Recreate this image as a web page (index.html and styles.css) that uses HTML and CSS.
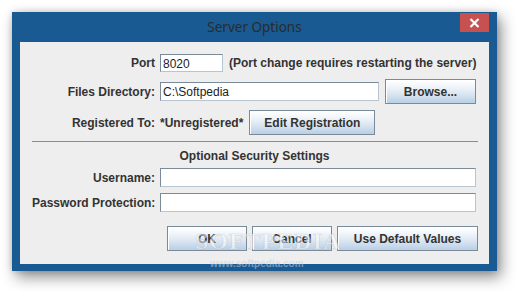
FILE: index.html
```html
<!DOCTYPE html>
<html>
<head>
<meta charset="utf-8">
<link rel="stylesheet" href="styles.css">
</head>
<body>
<div class="window">
  <div class="titlebar">
    <span class="title">Server Options</span>
    <span class="close"><svg width="11" height="10" viewBox="0 0 11 10"><path d="M1.5 1 L9.5 9 M9.5 1 L1.5 9" stroke="#fff" stroke-width="2.2"/></svg></span>
  </div>
  <div class="client">
    <div class="row r-port">
      <label class="lbl">Port</label>
      <div class="field f-port">8020</div>
      <span class="note">(Port change requires restarting the server)</span>
    </div>
    <div class="row r-files">
      <label class="lbl">Files Directory:</label>
      <div class="field f-dir">C:\Softpedia</div>
      <button class="btn b-browse">Browse...</button>
    </div>
    <div class="row r-reg">
      <label class="lbl">Registered To:</label>
      <span class="regval">*Unregistered*</span>
      <button class="btn b-edit">Edit Registration</button>
    </div>
    <div class="sep"></div>
    <div class="heading">Optional Security Settings</div>
    <div class="row r-user">
      <label class="lbl">Username:</label>
      <div class="field f-wide"></div>
    </div>
    <div class="row r-pass">
      <label class="lbl">Password Protection:</label>
      <div class="field f-wide"></div>
    </div>
    <div class="actions">
      <button class="btn b-ok">OK</button>
      <button class="btn b-cancel">Cancel</button>
      <button class="btn b-default">Use Default Values</button>
    </div>
    <div class="wm">SOFTPEDIA<sup>™</sup></div>
    <div class="wm-url">www.softpedia.com</div>
  </div>
</div>
</body>
</html>
```
FILE: styles.css
```css
* { box-sizing: border-box; }
html, body { margin: 0; padding: 0; background: #ffffff; }
body { width: 517px; height: 292px; overflow: hidden; padding: 12px 0 0 12px; }

.window {
  width: 485px;
  height: 259px;
  background: #195a92;
  padding: 0 8px 7px 8px;
  display: flex;
  flex-direction: column;
  box-shadow: 4px 6px 14px rgba(0,0,0,0.45), 0 0 6px rgba(0,0,0,0.15);
}
.titlebar {
  height: 30px;
  position: relative;
  display: flex;
  align-items: center;
  justify-content: center;
}
.title {
  font-family: "Noto Sans", "Open Sans", sans-serif;
  font-size: 13.5px;
  color: #2b2b2b;
}
.close {
  position: absolute;
  right: 0;
  top: 1px;
  width: 29px;
  height: 19px;
  background: #c75050;
  display: flex;
  align-items: center;
  justify-content: center;
}
.client {
  flex: 1;
  background: #eeeeee;
  padding: 12px 12px 0 12px;
  position: relative;
  font-family: "Liberation Sans", Arial, sans-serif;
  font-size: 12px;
  font-weight: bold;
  color: #333333;
}
.btn {
  height: 25px;
  border: 1px solid #7a8a99;
  background: linear-gradient(to bottom, #ffffff 0%, #f3f7fb 25%, #dbe6f1 60%, #b8cfe5 100%);
  box-shadow: inset 1px 1px 0 #ffffff;
  font-family: "Liberation Sans", Arial, sans-serif;
  font-size: 12px;
  font-weight: bold;
  color: #333333;
  padding: 0;
  margin: 0;
  flex: none;
}
.row { display: flex; align-items: center; }
.lbl { width: 123px; flex: none; text-align: right; margin-right: 5px; white-space: nowrap; }
.field {
  flex: none;
  height: 19px;
  background: #ffffff;
  border: 1px solid #7a8a99;
  border-right-color: #b8c4cf;
  border-bottom-color: #b8c4cf;
  font-weight: normal;
  font-size: 12px;
  color: #222;
  padding: 2px 0 0 2px;
  line-height: 14px;
}
.r-port { height: 18px; }
.r-port .field { height: 18px; }
.f-port { width: 63px; }
.note { margin-left: 6px; white-space: nowrap; }
.r-files { height: 25px; margin-top: 7px; }
.f-dir { width: 219px; }
.r-files .b-browse { width: 91px; margin-left: 6px; }
.r-reg { height: 25px; margin-top: 6px; }
.regval { white-space: nowrap; }
.r-reg .b-edit { width: 126px; margin-left: 6px; }
.sep { height: 1px; background: #7d8eac; margin-top: 6px; margin-right: -1px; }
.heading { height: 14px; line-height: 14px; margin-top: 7px; text-align: center; }
.r-user { height: 19px; margin-top: 5px; }
.r-pass { height: 19px; margin-top: 6px; }
.f-wide { width: 316px; }
.actions { display: flex; justify-content: flex-end; gap: 5px; margin-top: 14px; margin-right: -1px; }
.b-ok { width: 80px; }
.b-cancel { width: 80px; }
.b-default { width: 141px; }

.wm {
  position: absolute;
  left: 175px;
  top: 186px;
  font-family: "Liberation Serif", serif;
  font-size: 24px;
  font-weight: bold;
  letter-spacing: 1px;
  color: rgba(255,255,255,0.55);
  -webkit-text-stroke: 0.6px rgba(170,180,190,0.5);
  pointer-events: none;
}
.wm sup { font-size: 7px; vertical-align: top; -webkit-text-stroke: 0; }
.wm-url {
  position: absolute;
  left: 190px;
  top: 216px;
  font-family: "Liberation Sans", sans-serif;
  font-size: 10px;
  font-weight: bold;
  color: rgba(200,210,220,0.55);
  pointer-events: none;
}
```
